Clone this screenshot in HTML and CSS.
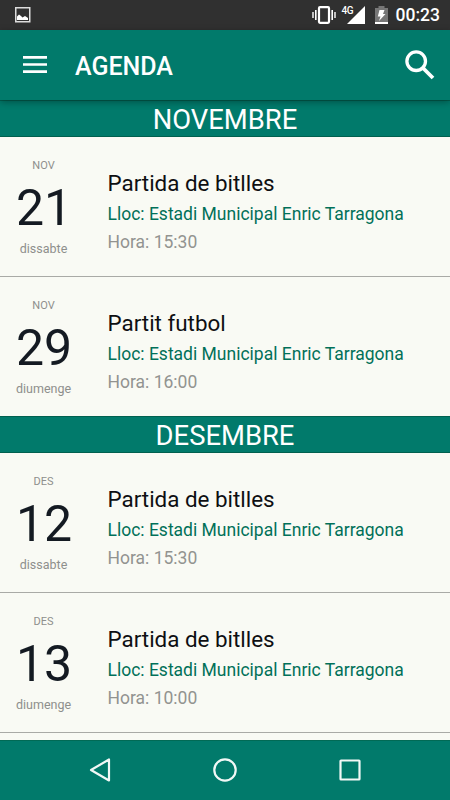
FILE: index.html
```html
<!DOCTYPE html>
<html lang="ca">
  <head>
    <meta charset="UTF-8" />
    <meta name="viewport" content="width=device-width, initial-scale=1.0" />
    <title>Agenda</title>
    <link rel="stylesheet" href="styles.css">
  </head>
  <body>
    <div class="phone">
      <!-- Status bar -->
      <div class="status">
        <svg class="status-image" width="16" height="16" viewBox="0 0 16 16">
          <rect x="0.75" y="0.75" width="14" height="14" fill="none" stroke="#ddd" stroke-width="1.5" />
          <path d="M2 13V9.500L4 7.500L6 9L7.500 10.500L10 9L13 11V13Z" fill="#fff" />
        </svg>
        <div class="status-right">
          <svg class="vibrate" width="24" height="18" viewBox="0 0 24 18" fill="none" stroke="#fff">
            <rect x="7" y="1.200" width="10" height="15.600" rx="1" stroke-width="2.200" />
            <path d="M3.800 4V14M20.200 4V14" stroke-width="1.600" />
            <path d="M1 6V12M23 6V12" stroke-width="1.400" />
          </svg>
          <div class="signal">
            <span>4G</span>
            <svg width="18" height="18" viewBox="0 0 18 18"><path d="M18 0V18H0Z" fill="#fff" /></svg>
          </div>
          <svg class="battery" width="13" height="18" viewBox="0 0 13 18">
            <path d="M0 2H3.500V0H9.500V2H13V18H0Z" fill="#777" />
            <path d="M0 16H13V18H0Z" fill="#fff" />
            <path d="M4.500 4H9.500L8 8H10.500L4 15L5.500 10.500H2.800Z" fill="#fff" />
          </svg>
          <span class="clock">00:23</span>
        </div>
      </div>

      <!-- Toolbar -->
      <div class="toolbar">
        <svg class="menu" width="24" height="17" viewBox="0 0 24 17">
          <path d="M0 1.400H24M0 8.500H24M0 15.600H24" stroke="#fff" stroke-width="2.600" />
        </svg>
        <h1>AGENDA</h1>
        <svg class="search" width="30" height="30" viewBox="0 0 30 30" fill="none" stroke="#fff">
          <circle cx="11.200" cy="11.200" r="9.300" stroke-width="3.300" />
          <path d="M18 18L28 28" stroke-width="3.800" />
        </svg>
      </div>

      <!-- Agenda -->
      <div class="agenda">
        <h2 class="month">NOVEMBRE</h2>
        <div class="event">
          <div class="date">
            <p class="date-month">NOV</p>
            <p class="date-day">21</p>
            <p class="date-week">dissabte</p>
          </div>
          <div class="info">
            <h3>Partida de bitlles</h3>
            <p class="place">Lloc: Estadi Municipal Enric Tarragona</p>
            <p class="hour">Hora: 15:30</p>
          </div>
        </div>
        <div class="event event-last">
          <div class="date">
            <p class="date-month">NOV</p>
            <p class="date-day">29</p>
            <p class="date-week">diumenge</p>
          </div>
          <div class="info">
            <h3>Partit futbol</h3>
            <p class="place">Lloc: Estadi Municipal Enric Tarragona</p>
            <p class="hour">Hora: 16:00</p>
          </div>
        </div>

        <h2 class="month">DESEMBRE</h2>
        <div class="event">
          <div class="date">
            <p class="date-month">DES</p>
            <p class="date-day">12</p>
            <p class="date-week">dissabte</p>
          </div>
          <div class="info">
            <h3>Partida de bitlles</h3>
            <p class="place">Lloc: Estadi Municipal Enric Tarragona</p>
            <p class="hour">Hora: 15:30</p>
          </div>
        </div>
        <div class="event">
          <div class="date">
            <p class="date-month">DES</p>
            <p class="date-day">13</p>
            <p class="date-week">diumenge</p>
          </div>
          <div class="info">
            <h3>Partida de bitlles</h3>
            <p class="place">Lloc: Estadi Municipal Enric Tarragona</p>
            <p class="hour">Hora: 10:00</p>
          </div>
        </div>
      </div>

      <!-- Navigation bar -->
      <div class="navbar">
        <svg width="24" height="24" viewBox="0 0 24 24"><path d="M21 1.500V22.500L3 12Z" /></svg>
        <svg width="24" height="24" viewBox="0 0 24 24"><circle cx="12" cy="12" r="10.700" /></svg>
        <svg width="24" height="24" viewBox="0 0 24 24"><rect x="2.500" y="2.500" width="19" height="19" rx="0.500" /></svg>
      </div>
    </div>
  </body>
</html>
```

FILE: styles.css
```css
* {
    margin: 0;
    padding: 0;
    box-sizing: border-box;
}

body {
    font-family: Roboto, "Liberation Sans", sans-serif;
    background-color: #f9faf4;
}

svg {
    display: block;
    flex-shrink: 0;
}

.phone {
    width: 450px;
    height: 800px;
    display: flex;
    flex-direction: column;
    overflow: hidden;
}

.status {
    height: 30px;
    flex-shrink: 0;
    padding: 0 10px 0 15px;
    display: flex;
    align-items: center;
    justify-content: space-between;
    background-color: #303030;
    color: #fff;
}

.status-right {
    display: flex;
    align-items: center;
}

.signal {
    display: flex;
    align-items: flex-start;
    margin: 0 10px 0 6px;
}

.signal span {
    width: 11px;
    font-size: 10px;
    line-height: 10px;
    font-weight: 500;
    letter-spacing: -0.5px;
    margin-right: -6px;
}

.battery {
    margin-right: 8px;
}

.clock {
    font-size: 17.5px;
    line-height: 20px;
    font-weight: 500;
}

.toolbar {
    position: relative;
    z-index: 1;
    height: 70px;
    flex-shrink: 0;
    padding: 0 15px 0 23px;
    display: flex;
    align-items: center;
    background-color: #017a6b;
    color: #fff;
    box-shadow: 0 2px 7px rgba(0, 0, 0, 0.35);
}

.menu {
    margin-bottom: 1px;
}

.toolbar h1 {
    margin-left: 28px;
    padding-top: 3px;
    font-size: 25px;
    line-height: 30px;
    font-weight: 500;
}

.search {
    margin-left: auto;
}

.agenda {
    flex: 1;
    min-height: 0;
    overflow: hidden;
}

.month {
    height: 37px;
    line-height: 39px;
    text-align: center;
    font-size: 27.4px;
    font-weight: 400;
    color: #fff;
    background-color: #017a6b;
    border-top: 1px solid #01604f;
    border-bottom: 1px solid #01604f;
}

.event {
    height: 140px;
    display: flex;
    border-bottom: 1px solid #a9aaa6;
}

.event-last {
    height: 139px;
    border-bottom: none;
}

.date {
    width: 87px;
    padding-top: 22px;
    text-align: center;
    color: #8e8f8c;
}

.date-month {
    font-size: 11px;
    line-height: 14px;
}

.date-day {
    margin-top: 5px;
    padding-left: 1px;
    font-size: 50px;
    line-height: 60px;
    color: #141a22;
}

.date-week {
    margin-top: 3px;
    font-size: 12.5px;
    line-height: 15px;
}

.info {
    padding: 31px 0 0 20.5px;
    white-space: nowrap;
}

.info h3 {
    font-size: 22.4px;
    line-height: 30px;
    font-weight: 400;
    color: #0e0f12;
}

.place {
    margin-top: 4px;
    font-size: 17.5px;
    line-height: 24px;
    color: #017059;
}

.hour {
    margin-top: 4px;
    font-size: 17.5px;
    line-height: 24px;
    color: #929390;
}

.navbar {
    height: 60px;
    flex-shrink: 0;
    padding: 0 88px 1px;
    display: flex;
    align-items: center;
    justify-content: space-between;
    background-color: #017a6b;
    border-top: 1px solid #016a55;
}

.navbar svg {
    fill: none;
    stroke: #f1f8f6;
    stroke-width: 2.2;
    stroke-linejoin: round;
}
```
